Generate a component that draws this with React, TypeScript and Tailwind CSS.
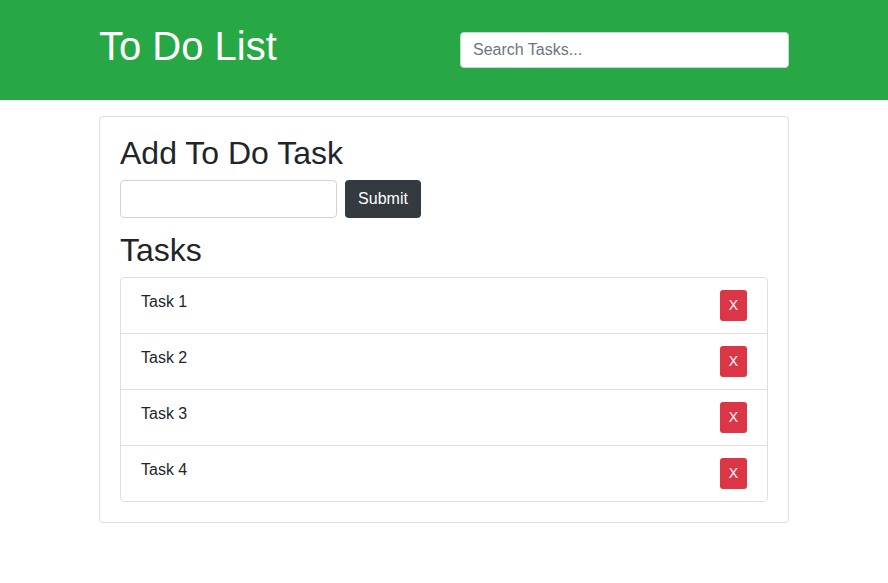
import React, { useState } from 'react';

export default function App() {
  const [tasks, setTasks] = useState(['Task 1', 'Task 2', 'Task 3', 'Task 4']);
  const [draft, setDraft] = useState('');
  const [query, setQuery] = useState('');

  const addTask = (e: React.FormEvent) => {
    e.preventDefault();
    if (!draft.trim()) return;
    setTasks(t => [...t, draft.trim()]);
    setDraft('');
  };

  const shown = tasks.filter(t => t.toLowerCase().includes(query.toLowerCase()));

  return (
    <div className="min-h-screen bg-white text-[#212529] font-['Liberation_Sans',Arial,sans-serif]">
      <header className="h-[100px] bg-[#28a745]">
        <div className="mx-auto flex w-[690px] items-start">
          <h1 className="mt-[26px] text-[40px] leading-none font-normal text-white">To Do List</h1>
          <input
            value={query}
            onChange={e => setQuery(e.target.value)}
            placeholder="Search Tasks..."
            className="mt-[32px] ml-auto h-[36px] w-[329px] rounded-[4px] border border-[#ced4da] bg-white px-3 text-base text-[#495057] placeholder:text-[#6c757d] outline-none"
          />
        </div>
      </header>

      <main className="mx-auto mt-4 w-[690px] rounded-[4px] border border-[#dfdfdf] p-5">
        <h2 className="mb-[11px] text-[32px] leading-none font-normal">Add To Do Task</h2>
        <form onSubmit={addTask} className="flex gap-2">
          <input
            value={draft}
            onChange={e => setDraft(e.target.value)}
            className="h-[38px] w-[217px] rounded-[4px] border border-[#ced4da] px-3 text-base outline-none"
          />
          <button type="submit" className="h-[38px] w-[76px] rounded-[4px] bg-[#343a40] text-base text-white">
            Submit
          </button>
        </form>

        <h2 className="mt-4 mb-[11px] text-[32px] leading-none font-normal">Tasks</h2>
        <ul className="divide-y divide-[#dfdfdf] rounded-[4px] border border-[#dfdfdf]">
          {shown.map(t => (
            <li key={t} className="flex items-start justify-between px-5 py-3">
              <span className="text-base leading-6">{t}</span>
              <button
                onClick={() => setTasks(ts => ts.filter(x => x !== t))}
                className="h-[31px] rounded-[3px] bg-[#dc3545] px-[9px] text-sm leading-[21px] text-white"
              >
                X
              </button>
            </li>
          ))}
        </ul>
      </main>
    </div>
  );
}
